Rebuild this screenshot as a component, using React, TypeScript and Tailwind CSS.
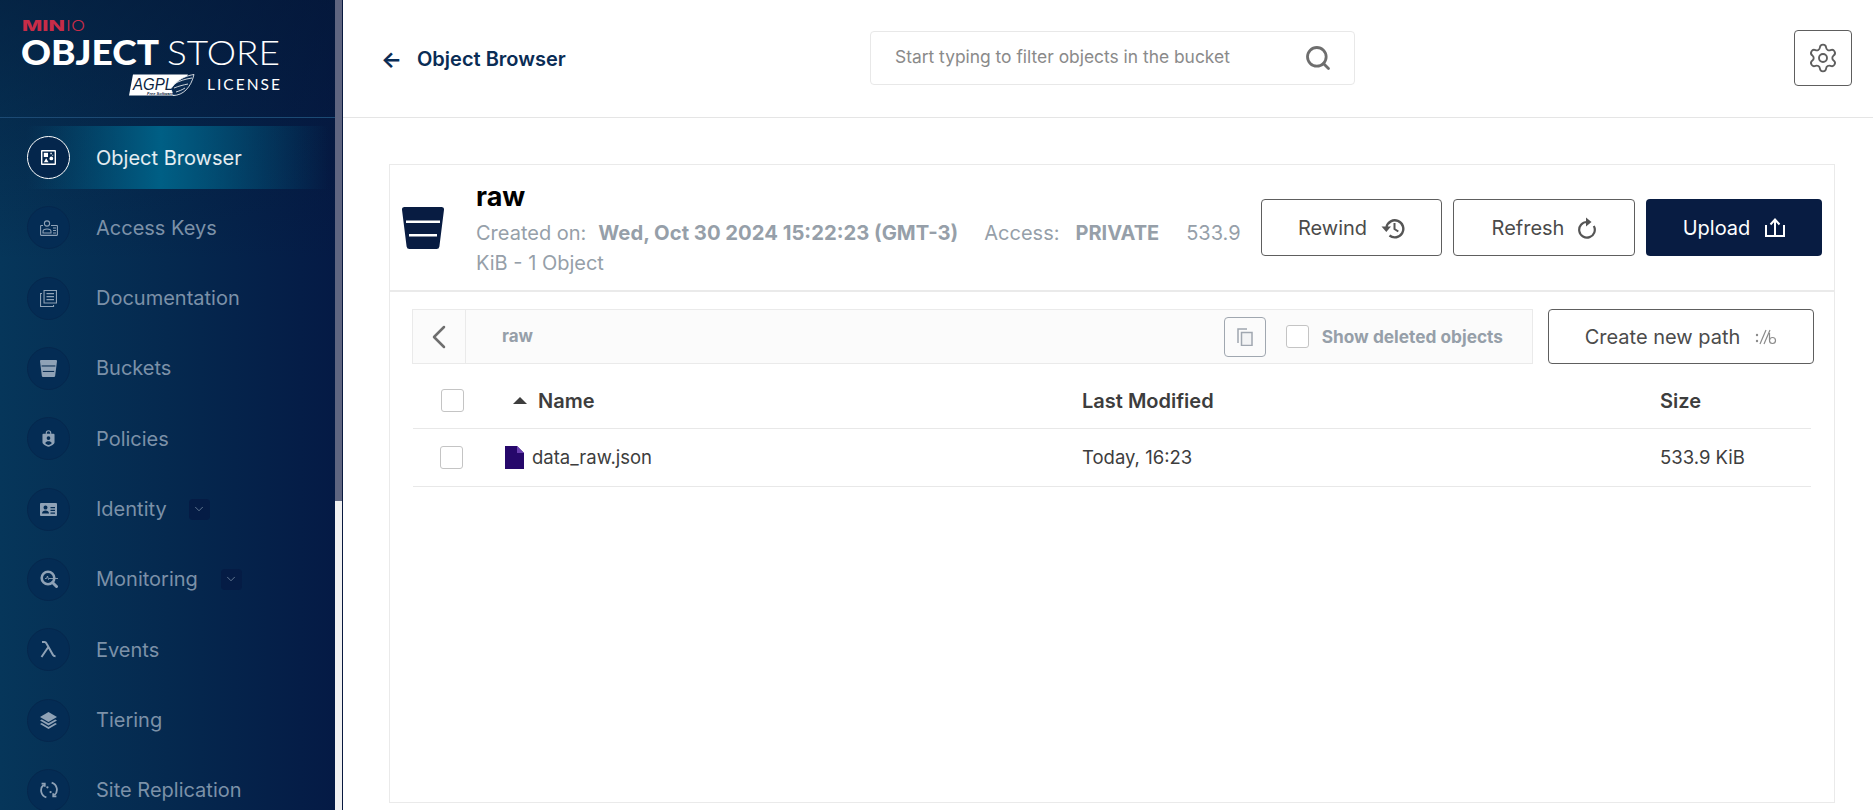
import { ChevronDown, ChevronLeft, Search, Settings } from "lucide-react";
import type { ReactNode } from "react";

const ObjectBrowserIcon = () => (
  <svg viewBox="0 0 16 16" className="w-[15px] h-[15px]" fill="currentColor">
    <path fillRule="evenodd" d="M1 0h14a1 1 0 0 1 1 1v14a1 1 0 0 1-1 1H1a1 1 0 0 1-1-1V1a1 1 0 0 1 1-1zm.5 1.5v13h13v-13z" />
    <rect x="3" y="3" width="4.5" height="4.5" />
    <circle cx="11" cy="9" r="2" />
    <path d="M5.500 8.800 8 13H3z" />
    <path d="M10 3h1.500v1.500H10zM12 5h1v1h-1z" />
  </svg>
);

const AccessKeysIcon = () => (
  <svg viewBox="0 0 18 16" className="w-[18px] h-[16px]" fill="none" stroke="currentColor" strokeWidth="1.1">
    <circle cx="7" cy="3.500" r="2.600" />
    <path d="M3 5.500H1.200a.6.6 0 0 0-.6.6v8.700c0 .3.3.6.6.6h15.600c.3 0 .6-.3.6-.6V6.100a.6.6 0 0 0-.6-.6H11" />
    <path d="M3 13v-1.600C3 9.800 4.600 9 7 9s4 .8 4 2.400V13z" />
    <path d="M13 8h3M13 10.500h3M13 13h3" />
  </svg>
);

const DocumentationIcon = () => (
  <svg viewBox="0 0 17 17" className="w-[17px] h-[17px]" fill="currentColor">
    <path fillRule="evenodd" d="M3.500 0H17v13.500H3.500zM4.600 1.100v11.300h11.300V1.100z" />
    <path d="M6.500 3h7.500v1.300H6.500zM6.500 6h7.500v1.300H6.500zM6.500 9h7.500v1.300H6.500z" />
    <path d="M0 3h2v1.100H1.100v11.800H13V15h1.100v2H0z" />
  </svg>
);

const BucketIcon = ({ className }: { className: string }) => (
  <svg viewBox="0 0 42 42" className={className} fill="currentColor">
    <path d="M2.500 0h37A2.500 2.500 0 0 1 42 2.800l-4.600 36.600A3 3 0 0 1 34.400 42H7.600a3 3 0 0 1-3-2.600L0 2.800A2.500 2.500 0 0 1 2.500 0z" />
    <rect x="4" y="13.500" width="34" height="2.500" fill="var(--gap)" />
    <rect x="7" y="27" width="28" height="2.500" fill="var(--gap)" />
  </svg>
);

const PoliciesIcon = () => (
  <svg viewBox="0 0 14 18" className="w-[13px] h-[17px]" fill="currentColor">
    <path fillRule="evenodd" d="M4 4V3a3 3 0 0 1 6 0v1h2.500a1 1 0 0 1 1 1v8c0 2-3.500 4-6.500 5-3-1-6.500-3-6.500-5V5a1 1 0 0 1 1-1zm1.200 0h3.600V3a1.800 1.800 0 0 0-3.600 0zM7 6.500a2 2 0 1 0 0 4 2 2 0 0 0 0-4zM3.500 14c.5-1.500 2-2 3.500-2s3 .5 3.500 2C9.500 15 8 15.700 7 16c-1-.3-2.500-1-3.500-2z" />
  </svg>
);

const IdentityIcon = () => (
  <svg viewBox="0 0 17 13" className="w-[17px] h-[13px]" fill="currentColor">
    <path fillRule="evenodd" d="M1 0h15a1 1 0 0 1 1 1v11a1 1 0 0 1-1 1H1a1 1 0 0 1-1-1V1a1 1 0 0 1 1-1zm4.500 2.500a2 2 0 1 0 0 4 2 2 0 0 0 0-4zM2 10.500h7c0-2-1.500-3-3.500-3s-3.500 1-3.500 3zM10.500 4v1.200H15V4zm0 2.800V8H15V6.800zm0 2.700v1.200H15V9.500z" />
  </svg>
);

const MonitoringIcon = () => (
  <svg viewBox="0 0 18 18" className="w-[18px] h-[18px]" fill="none" stroke="currentColor">
    <circle cx="8" cy="8" r="6.300" strokeWidth="2.600" />
    <path d="M12.500 12.500 16.500 16.500" strokeWidth="3" strokeLinecap="round" />
    <path d="M5 8.500h1.500l1-2.500 1 3.500.5-1h9" strokeWidth="0.900" />
  </svg>
);

const LambdaIcon = () => (
  <svg viewBox="0 0 17 17" className="w-[17px] h-[17px]" fill="none" stroke="currentColor" strokeWidth="2">
    <path d="M2 1h2.500c1 0 1.500.5 2 1.500L13 14c.4.800 1 1.200 2.500 1.200M8 6.500 1.500 16" />
  </svg>
);

const TieringIcon = () => (
  <svg viewBox="0 0 17 17" className="w-[17px] h-[17px]" fill="currentColor">
    <path d="M8.500 0 17 5 8.500 10 0 5z" />
    <path d="M8.500 11.300 1.800 7.400 0 8.500l8.500 5 8.500-5-1.800-1.100z" />
    <path d="M8.500 15 1.800 11 0 12l8.500 5 8.500-5-1.800-1z" />
  </svg>
);

const ReplicationIcon = () => (
  <svg viewBox="0 0 17 17" className="w-[18px] h-[18px]" fill="none" stroke="currentColor" strokeWidth="1.700">
    <path d="M6 15.500A7 7 0 0 1 3.500 3.500M11 1.500a7 7 0 0 1 2.500 12" />
    <path d="M1.500 2.500h3v3M15.500 14.500h-3v-3" />
    <circle cx="7" cy="6" r="1.100" fill="currentColor" stroke="none" />
    <circle cx="10" cy="10.500" r="1.100" fill="currentColor" stroke="none" />
  </svg>
);

const RewindIcon = () => (
  <svg viewBox="0 0 24 22" className="w-[24px] h-[22px]" fill="none" stroke="#555" strokeWidth="2.400">
    <path d="M5.500 10a8.500 8.500 0 1 1 3 8.500" />
    <path d="M.5 9.500h9.500l-4.700 5.500z" fill="#555" stroke="none" />
    <path d="M13.500 6v6l3.800 2.500" strokeWidth="2" />
  </svg>
);

const RefreshIcon = () => (
  <svg viewBox="0 0 18 22" className="w-[18px] h-[22px]" fill="none" stroke="#555" strokeWidth="2.200">
    <path d="M9 5a7.800 7.800 0 1 0 6.800 4" />
    <path d="M8 .5 13.500 5 8 9.500z" fill="#555" stroke="none" />
  </svg>
);

const UploadIcon = () => (
  <svg viewBox="0 0 20 19" className="w-[20px] h-[19px]" fill="none" stroke="#fff" strokeWidth="2">
    <path d="M1 7v11h18V7" />
    <path d="M10 3v14" />
    <path d="M5.500 6.500 10 1.500l4.500 5" />
  </svg>
);

const AgplBadge = () => (
  <g>
    <path d="M133 74.500h55l-13 21h-46z" fill="#fff" />
    <path d="M173 95.500c10 0 18-8 21-21-7 1-14 4-19 9l-4 5z" fill="#0a2a50" stroke="#fff" strokeWidth="0.800" />
    <path d="M174 84c5-3 11-5 18-6M174 88c5-2 9-3 14-4M176 92c3-1 6-2 9-4" stroke="#fff" strokeWidth="0.800" fill="none" />
    <text x="133" y="90" fontFamily="Liberation Sans, sans-serif" fontStyle="italic" fontWeight="400" fontSize="17" fill="#0a2340" textLength="40" lengthAdjust="spacingAndGlyphs">AGPL</text>
    <text x="147" y="94.800" fontFamily="Liberation Sans, sans-serif" fontStyle="italic" fontWeight="700" fontSize="4" fill="#0a2340">Free Software</text>
  </g>
);

const Logo = () => (
  <svg viewBox="0 0 335 117" className="block w-[335px] h-[117px]">
    <text x="22" y="31" fontFamily="Inter, sans-serif" fontWeight="800" fontSize="14" fill="#c72c48" textLength="43" lengthAdjust="spacingAndGlyphs">MIN</text>
    <text x="66" y="31" fontFamily="Inter, sans-serif" fontWeight="300" fontSize="14" fill="#c72c48" textLength="19" lengthAdjust="spacingAndGlyphs">IO</text>
    <text x="21" y="65" fontFamily="Lato, sans-serif" fontWeight="900" fontSize="34" fill="#fff" textLength="138" lengthAdjust="spacingAndGlyphs">OBJECT</text>
    <text x="167" y="65" fontFamily="Lato, sans-serif" fontWeight="300" fontSize="34" fill="#fff" textLength="113" lengthAdjust="spacingAndGlyphs">STORE</text>
    <AgplBadge />
    <text x="207" y="90" fontFamily="Lato, sans-serif" fontWeight="400" fontSize="15.500" fill="#fff" textLength="73" lengthAdjust="spacing">LICENSE</text>
  </svg>
);

const navItems: { label: string; icon: ReactNode; box?: string }[] = [
  { label: "Access Keys", icon: <AccessKeysIcon /> },
  { label: "Documentation", icon: <DocumentationIcon /> },
  { label: "Buckets", icon: <BucketIcon className="w-[17px] h-[17px] [--gap:#05294f]" /> },
  { label: "Policies", icon: <PoliciesIcon /> },
  { label: "Identity", icon: <IdentityIcon />, box: "ml-[2px]" },
  { label: "Monitoring", icon: <MonitoringIcon />, box: "ml-[3px]" },
  { label: "Events", icon: <LambdaIcon /> },
  { label: "Tiering", icon: <TieringIcon /> },
  { label: "Site Replication", icon: <ReplicationIcon /> },
];

const Sidebar = () => (
  <aside className="w-[343px] h-full shrink-0 flex overflow-hidden border-r border-[#08193f] bg-[#f1f1f1]">
    <div className="w-[335px] h-full shrink-0 text-[20px] bg-[linear-gradient(180deg,rgba(4,22,52,0.55)_0,rgba(4,22,52,0)_260px),linear-gradient(90deg,#06365a_0%,#05294f_50%,#051a45_100%)]">
      <div className="border-b border-[#1c4a74]">
        <Logo />
      </div>
      <nav className="pt-2">
        <a className="flex items-center h-[63px] mb-[7.33px] pl-[27px] gap-[26px] text-white/90 bg-[linear-gradient(90deg,transparent_8%,#005f85_48%,transparent_98%)]">
          <span className="w-[43px] h-[43px] rounded-full border border-white bg-[#04264c] flex items-center justify-center text-white">
            <ObjectBrowserIcon />
          </span>
          <span>Object Browser</span>
        </a>
        {navItems.map((item) => (
          <a key={item.label} className="flex items-center h-[63px] mb-[7.33px] pl-[27px] gap-[26px] text-[#7c91a8]">
            <span className="w-[43px] h-[43px] shrink-0 rounded-full bg-[#042c54] border border-[#05274d] flex items-center justify-center text-[#8fa2b6]">
              {item.icon}
            </span>
            <span className="whitespace-nowrap">{item.label}</span>
            {item.box && (
              <span className={`-translate-x-[6px] w-[21px] h-[21px] rounded-sm bg-[#051c45] flex items-center justify-center ${item.box}`}>
                <ChevronDown size={14} strokeWidth={1.3} />
              </span>
            )}
          </a>
        ))}
      </nav>
    </div>
    <div className="w-[7px] h-[501px] shrink-0 bg-[#5f6580]" />
  </aside>
);

const Check = ({ className = "" }: { className?: string }) => (
  <span className={`block w-[23px] h-[23px] rounded-[3px] border border-[#c4c4c4] bg-white ${className}`} />
);

const OutlineButton = ({ label, icon, className }: { label: string; icon: ReactNode; className: string }) => (
  <button className={`h-[57px] rounded-[4px] border border-[#5e5e5e] bg-white flex items-center justify-center gap-[14px] text-[20px] text-[#4b4b4b] ${className}`}>
    {label}
    {icon}
  </button>
);

const App = () => (
  <div className="w-full h-screen flex overflow-hidden bg-white font-['Inter',sans-serif]">
    <Sidebar />
    <main className="flex-1 min-w-0 h-full flex flex-col">
      <header className="h-[118px] shrink-0 border-b border-[#e5e5e5] flex items-center pl-[38px] pr-[21px]">
        <div className="w-[489px] flex items-center gap-[15px] text-[20px] font-semibold text-[#0a2c55]">
          <span className="text-[22px] leading-none font-bold">←</span>
          Object Browser
        </div>
        <div className="w-[485px] h-[54px] -mt-[2px] rounded-[4px] border border-[#e8e8e8] flex items-center justify-between pl-6 pr-[22px]">
          <span className="text-[17.4px] text-[#8a8a8a]">Start typing to filter objects in the bucket</span>
          <Search size={28} strokeWidth={2.4} className="text-[#6e6e6e]" />
        </div>
        <button className="ml-auto w-[58px] h-[56px] -mt-[2px] rounded-[4px] border border-[#5e5e5e] flex items-center justify-center text-[#5e5e5e]">
          <Settings size={32} strokeWidth={1.4} />
        </button>
      </header>

      <div className="flex-1 min-h-0 pt-[46px] pl-[46px] pr-[38px] pb-[7px]">
        <section className="h-full border border-[#eaeaea]">
          <div className="h-[127px] flex items-center pl-3 pr-[12px] border-b-2 border-[#eaeaea]">
            <BucketIcon className="w-[42px] h-[42px] shrink-0 text-[#081c42] [--gap:#ffffff]" />
            <div className="w-[770px] ml-8 pt-[3px] shrink-0 text-[20px] leading-[30px] text-[#969fa9]">
              <h1 className="text-[27px] leading-[32px] mb-[5px] font-bold text-black">raw</h1>
              <div>
                <span>Created on:</span>
                <span className="ml-[12px] text-[20.25px] font-bold">Wed, Oct 30 2024 15:22:23 (GMT-3)</span>
                <span className="ml-[26px]">Access:</span>
                <span className="ml-[16px] font-bold">PRIVATE</span>
                <span className="ml-[27px]">533.9</span>{" "}
                <span className="whitespace-nowrap">KiB - 1 Object</span>
              </div>
            </div>
            <div className="ml-auto flex">
              <OutlineButton label="Rewind" icon={<RewindIcon />} className="w-[181px]" />
              <OutlineButton label="Refresh" icon={<RefreshIcon />} className="w-[182px] ml-[11px]" />
              <button className="w-[176px] h-[57px] ml-[11px] rounded-[4px] bg-[#081c42] flex items-center justify-center gap-[15px] text-[20px] text-white">
                Upload
                <UploadIcon />
              </button>
            </div>
          </div>

          <div className="pt-[17px] pl-[22px] pr-[20px] flex gap-[15px]">
            <div className="flex-1 h-[55px] border border-[#eaeaea] bg-[#fbfbfb] flex items-center">
              <div className="w-[53px] h-full border-r border-[#eaeaea] flex items-center justify-center text-[#6e6e6e]">
                <ChevronLeft size={40} strokeWidth={1.5} />
              </div>
              <span className="ml-9 text-[17px] font-bold text-[#969fa9]">raw</span>
              <div className="ml-auto w-[42px] h-[40px] rounded-[4px] border border-[#a0a7b0] flex items-center justify-center">
                <svg viewBox="0 0 16 18" className="w-[16px] h-[18px]" fill="none" stroke="#a0a7b0" strokeWidth="1.500">
                  <path d="M1 15V1h9" />
                  <rect x="4.500" y="4.500" width="10.500" height="13" fill="#f3f4f5" />
                </svg>
              </div>
              <Check className="ml-[20px] bg-[#fbfbfb]" />
              <span className="ml-[13px] mr-[29px] text-[17.3px] font-bold text-[#969fa9]">Show deleted objects</span>
            </div>
            <button className="w-[266px] h-[55px] rounded-[4px] border border-[#5e5e5e] flex items-center justify-center gap-[15px] text-[20px] text-[#4b4b4b]">
              Create new path
              <svg viewBox="0 0 22 16" className="w-[22px] h-[16px]" fill="none" stroke="#8b8b8b" strokeWidth="1.200">
                <circle cx="2" cy="6" r="1.200" fill="#8b8b8b" stroke="none" />
                <circle cx="2" cy="12" r="1.200" fill="#8b8b8b" stroke="none" />
                <path d="M5 15 11 1M9 15 15 1" />
                <circle cx="17.500" cy="11.500" r="3" />
                <path d="M14.500 11V4" />
              </svg>
            </button>
          </div>

          <div className="mx-[23px] text-[#3d3d3d]">
            <div className="h-[65px] pt-[9px] border-b border-[#e8e8e8] grid grid-cols-[92px_577px_578px_1fr] items-center text-[20px] font-semibold">
              <Check className="ml-[28px]" />
              <div className="flex items-center gap-[11px] pl-[8px]">
                <span className="w-0 h-0 border-x-[7px] border-x-transparent border-b-[7px] border-b-[#3d3d3d]" />
                Name
              </div>
              <div>Last Modified</div>
              <div>Size</div>
            </div>
            <div className="h-[58px] border-b border-[#e8e8e8] grid grid-cols-[92px_577px_578px_1fr] items-center text-[18.5px]">
              <Check className="ml-[27px]" />
              <div className="flex items-center gap-[8px]">
                <svg viewBox="0 0 19 23" className="w-[19px] h-[23px]">
                  <path d="M0 0h12l7 7v16H0z" fill="#26086b" />
                  <path d="M12 0l7 7h-7z" fill="#6a3fb0" />
                </svg>
                data_raw.json
              </div>
              <div>Today, 16:23</div>
              <div>533.9 KiB</div>
            </div>
          </div>
        </section>
      </div>
    </main>
  </div>
);

export default App;
